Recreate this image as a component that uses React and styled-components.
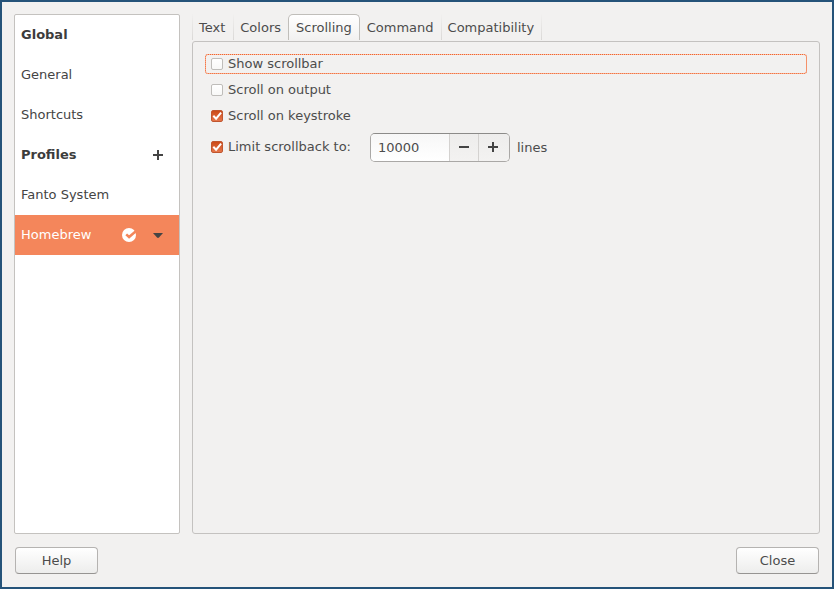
import React, { useState } from "react";
import styled, { createGlobalStyle, css } from "styled-components";

const GlobalStyle = createGlobalStyle`
  * { box-sizing: border-box; }
  body { margin: 0; }
  body, button, input {
    font: 13px/20px "DejaVu Sans", sans-serif;
    color: #4c4c4c;
  }
`;

const Window = styled.div`
  min-height: 100vh;
  display: flex;
  flex-direction: column;
  gap: 13px;
  padding: 12px 12px 13px;
  border: 2px solid #255379;
  background: #f2f1f0;
`;

const Content = styled.main`
  flex: 1;
  display: flex;
  gap: 12px;
`;

const Sidebar = styled.nav`
  flex: none;
  width: 166px;
  background: #fff;
  border: 1px solid #c4c2bf;
  border-radius: 2px;
`;

const SidebarRow = styled.div`
  display: flex;
  align-items: center;
  height: 40px;
  padding: 0 15px 0 6px;
  background: ${(p) => (p.$selected ? "#f4865b" : "transparent")};
`;

const SidebarHeading = styled.h2`
  flex: 1;
  margin: 0;
  font-size: 13px;
  line-height: 20px;
  font-weight: bold;
  color: #3c3c3c;
`;

const SidebarItem = styled.button`
  flex: 1;
  height: 40px;
  padding: 0;
  border: 0;
  background: none;
  text-align: left;
  white-space: nowrap;
  color: ${(p) => (p.$selected ? "#fff" : "#444")};
`;

const IconButton = styled.button`
  display: flex;
  padding: 0;
  border: 0;
  background: none;
  color: #444;
`;

const DefaultMark = styled.svg`
  flex: none;
  margin-right: 16px;
`;

const Notebook = styled.section`
  flex: 1;
  display: flex;
  flex-direction: column;
`;

const TabBar = styled.div`
  display: flex;
  height: 27px;
  padding-bottom: 1px;
`;

const Tab = styled.button`
  padding: 1px 7px 0 6px;
  border: 0;
  border-left: 1px solid;
  border-image: linear-gradient(#f2f1f0, #d9d7d5) 1;
  background: none;
  white-space: nowrap;

  &:first-child { padding-right: 8px; }
  &:last-child { border-right: 1px solid; }

  &[aria-selected="true"] {
    padding: 0 7px;
    border: 1px solid #c0beba;
    border-bottom: 0;
    border-image: none;
    border-radius: 5px 5px 0 0;
    background: linear-gradient(#fff, #f2f1f0);
  }

  &[aria-selected="true"] + & { border-left-width: 0; padding-left: 7px; }
`;

const TabPanel = styled.div`
  flex: 1;
  display: flex;
  flex-direction: column;
  gap: 6px;
  padding: 12px;
  border: 1px solid #c4c2c0;
  border-radius: 3px;
`;

const focusRing = css`
  border-color: #f1662f;
  background:
    linear-gradient(#f2f1f0, #f2f1f0) padding-box,
    linear-gradient(#f8bca4, #f8bca4) border-box;
`;

const CheckLabel = styled.label`
  display: flex;
  align-items: center;
  gap: 5px;
  height: 20px;
  padding: 0 5px;
  border: 1px dotted transparent;
  border-radius: 3px;
  ${(p) => p.$focused && focusRing}
`;

const CheckBoxWrap = styled.span`
  display: grid;
  width: 12px;
  height: 12px;

  & > * { grid-area: 1 / 1; }
`;

const CheckInput = styled.input`
  appearance: none;
  width: 12px;
  height: 12px;
  margin: 0;
  border: 1px solid #bfbdba;
  border-radius: 2px;
  background: linear-gradient(#fff, #f8f8f7);
  outline: none;

  &:checked {
    border-color: #c0562f;
    background: linear-gradient(#cc4a17, #e6774b);
  }
`;

const Tick = styled.svg`
  z-index: 1;
  pointer-events: none;
`;

const LimitRow = styled.div`
  display: flex;
  align-items: center;
  padding-top: 1px;
`;

const LimitLabel = styled(CheckLabel)`
  width: 165px;
  height: 22px;
  padding-bottom: 2px;
`;

const SpinBox = styled.div`
  display: flex;
  width: 140px;
  height: 29px;
  margin-right: 7px;
  border: 1px solid #aaa8a6;
  border-top-color: #8c8b89;
  border-radius: 5px;
  overflow: hidden;
  background: #f2f1f0;
`;

const SpinInput = styled.input`
  flex: 1;
  min-width: 0;
  padding: 0 7px;
  border: 0;
  outline: none;
  background: linear-gradient(#f7f7f7, #fff);
`;

const SpinButton = styled.button`
  display: flex;
  align-items: center;
  justify-content: center;
  width: ${(p) => (p.$wide ? "31px" : "29px")};
  padding: 0 ${(p) => (p.$wide ? "2px" : "0")} 2px 0;
  border: 0;
  border-left: 1px solid #d4d2d0;
  background: linear-gradient(#eeedec, #f3f2f1);
  color: #444;
`;

const ActionBar = styled.footer`
  display: flex;
  justify-content: space-between;
  padding: 0 1px;
`;

const ActionButton = styled.button`
  width: 83px;
  height: 27px;
  padding: 0;
  border: 1px solid #b5b3b1;
  border-bottom-color: #969492;
  border-radius: 4px;
  background: linear-gradient(#fff, #ededec);
`;

const PlusIcon = () => (
  <svg width="12" height="12" viewBox="0 0 12 12" aria-hidden="true">
    <path d="M5 1h2v4h4v2H7v4H5V7H1V5h4z" fill="currentColor" />
  </svg>
);

const MinusIcon = () => (
  <svg width="12" height="12" viewBox="0 0 12 12" aria-hidden="true">
    <path d="M1 5h10v2H1z" fill="currentColor" />
  </svg>
);

const ArrowIcon = () => (
  <svg width="12" height="12" viewBox="0 0 12 12" aria-hidden="true">
    <path d="M1 4h10L7 8.5Q6 9.3 5 8.5z" fill="currentColor" />
  </svg>
);

const DefaultIcon = () => (
  <DefaultMark width="14" height="14" viewBox="0 0 14 14" role="img" aria-label="Default profile">
    <circle cx="7" cy="7" r="7" fill="#fff" />
    <path d="M4.2 6.4l2.9 2.6L14.2 3" fill="none" stroke="#f4865b" strokeWidth="2.6" />
  </DefaultMark>
);

function Check({ label, id, checked, onToggle, focused, Label = CheckLabel }) {
  return (
    <Label htmlFor={id} $focused={focused}>
      <CheckBoxWrap>
        <CheckInput id={id} type="checkbox" checked={checked} onChange={onToggle} />
        {checked && (
          <Tick width="12" height="12" viewBox="0 0 12 12" aria-hidden="true">
            <path d="M2.3 5.7l2.8 3 5-6" fill="none" stroke="#fff" strokeWidth="2" />
          </Tick>
        )}
      </CheckBoxWrap>
      {label}
    </Label>
  );
}

const tabs = ["Text", "Colors", "Scrolling", "Command", "Compatibility"];

export default function App() {
  const [tab, setTab] = useState("Scrolling");
  const [page, setPage] = useState("Homebrew");
  const [lines, setLines] = useState(10000);
  const [options, setOptions] = useState({ bar: false, output: false, key: true, limit: true });
  const bind = (name) => ({
    id: name,
    checked: options[name],
    onToggle: () => setOptions({ ...options, [name]: !options[name] }),
  });
  const item = (name, extra) => (
    <SidebarRow $selected={page === name}>
      <SidebarItem type="button" $selected={page === name} onClick={() => setPage(name)}>
        {name}
      </SidebarItem>
      {extra}
    </SidebarRow>
  );

  return (
    <>
      <GlobalStyle />
      <Window>
        <Content>
          <Sidebar aria-label="Preferences">
            <SidebarRow><SidebarHeading>Global</SidebarHeading></SidebarRow>
            {item("General")}
            {item("Shortcuts")}
            <SidebarRow>
              <SidebarHeading>Profiles</SidebarHeading>
              <IconButton type="button" aria-label="Add profile"><PlusIcon /></IconButton>
            </SidebarRow>
            {item("Fanto System")}
            {item(
              "Homebrew",
              <>
                <DefaultIcon />
                <IconButton type="button" aria-label="Profile menu"><ArrowIcon /></IconButton>
              </>
            )}
          </Sidebar>
          <Notebook>
            <TabBar role="tablist">
              {tabs.map((name) => (
                <Tab
                  key={name}
                  type="button"
                  role="tab"
                  aria-selected={tab === name}
                  onClick={() => setTab(name)}
                >
                  {name}
                </Tab>
              ))}
            </TabBar>
            <TabPanel role="tabpanel" aria-label={tab}>
              <Check label="Show scrollbar" focused {...bind("bar")} />
              <Check label="Scroll on output" {...bind("output")} />
              <Check label="Scroll on keystroke" {...bind("key")} />
              <LimitRow>
                <Check label="Limit scrollback to:" Label={LimitLabel} {...bind("limit")} />
                <SpinBox>
                  <SpinInput
                    aria-label="Scrollback lines"
                    inputMode="numeric"
                    value={lines}
                    onChange={(e) => setLines(Number(e.target.value) || 0)}
                  />
                  <SpinButton type="button" aria-label="Decrease" onClick={() => setLines(lines - 1)}>
                    <MinusIcon />
                  </SpinButton>
                  <SpinButton $wide type="button" aria-label="Increase" onClick={() => setLines(lines + 1)}>
                    <PlusIcon />
                  </SpinButton>
                </SpinBox>
                <span>lines</span>
              </LimitRow>
            </TabPanel>
          </Notebook>
        </Content>
        <ActionBar>
          <ActionButton type="button">Help</ActionButton>
          <ActionButton type="button">Close</ActionButton>
        </ActionBar>
      </Window>
    </>
  );
}
